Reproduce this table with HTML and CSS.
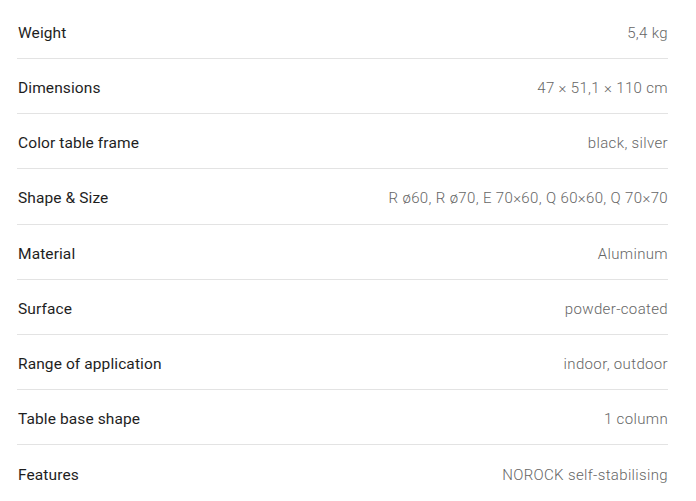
FILE: index.html
```html
<!DOCTYPE html>
<html lang="en">
<head>
<meta charset="utf-8">
<link rel="stylesheet" href="styles.css">
</head>
<body>
<dl class="specs">
  <div class="row"><dt>Weight</dt><dd>5,4 kg</dd></div>
  <div class="row"><dt>Dimensions</dt><dd>47 × 51,1 × 110 cm</dd></div>
  <div class="row"><dt>Color table frame</dt><dd>black, silver</dd></div>
  <div class="row"><dt>Shape &amp; Size</dt><dd>R ø60, R ø70, E 70×60, Q 60×60, Q 70×70</dd></div>
  <div class="row"><dt>Material</dt><dd>Aluminum</dd></div>
  <div class="row"><dt>Surface</dt><dd>powder-coated</dd></div>
  <div class="row"><dt>Range of application</dt><dd>indoor, outdoor</dd></div>
  <div class="row"><dt>Table base shape</dt><dd>1 column</dd></div>
  <div class="row last"><dt>Features</dt><dd>NOROCK self-stabilising</dd></div>
</dl>
</body>
</html>
```
FILE: styles.css
```css
html, body {
  margin: 0;
  padding: 0;
  background: #fff;
}
body {
  padding: 4px 28px 0 17px;
  font-family: Roboto, "Liberation Sans", sans-serif;
  font-size: 15px;
}
.specs {
  margin: 0;
}
.row {
  display: flex;
  justify-content: space-between;
  align-items: center;
  height: 55.14px;
  box-sizing: border-box;
  border-bottom: 1px solid #e3e3e3;
  padding-top: 4px;
}
.row.last {
  border-bottom: none;
}
dt {
  color: #1e1e1e;
  margin: 0 0 0 1px;
  font-size: 15.5px;
  letter-spacing: 0.1px;
}
dd {
  margin: 0;
  color: #666;
  font-weight: 300;
  letter-spacing: 0.35px;
}
```
